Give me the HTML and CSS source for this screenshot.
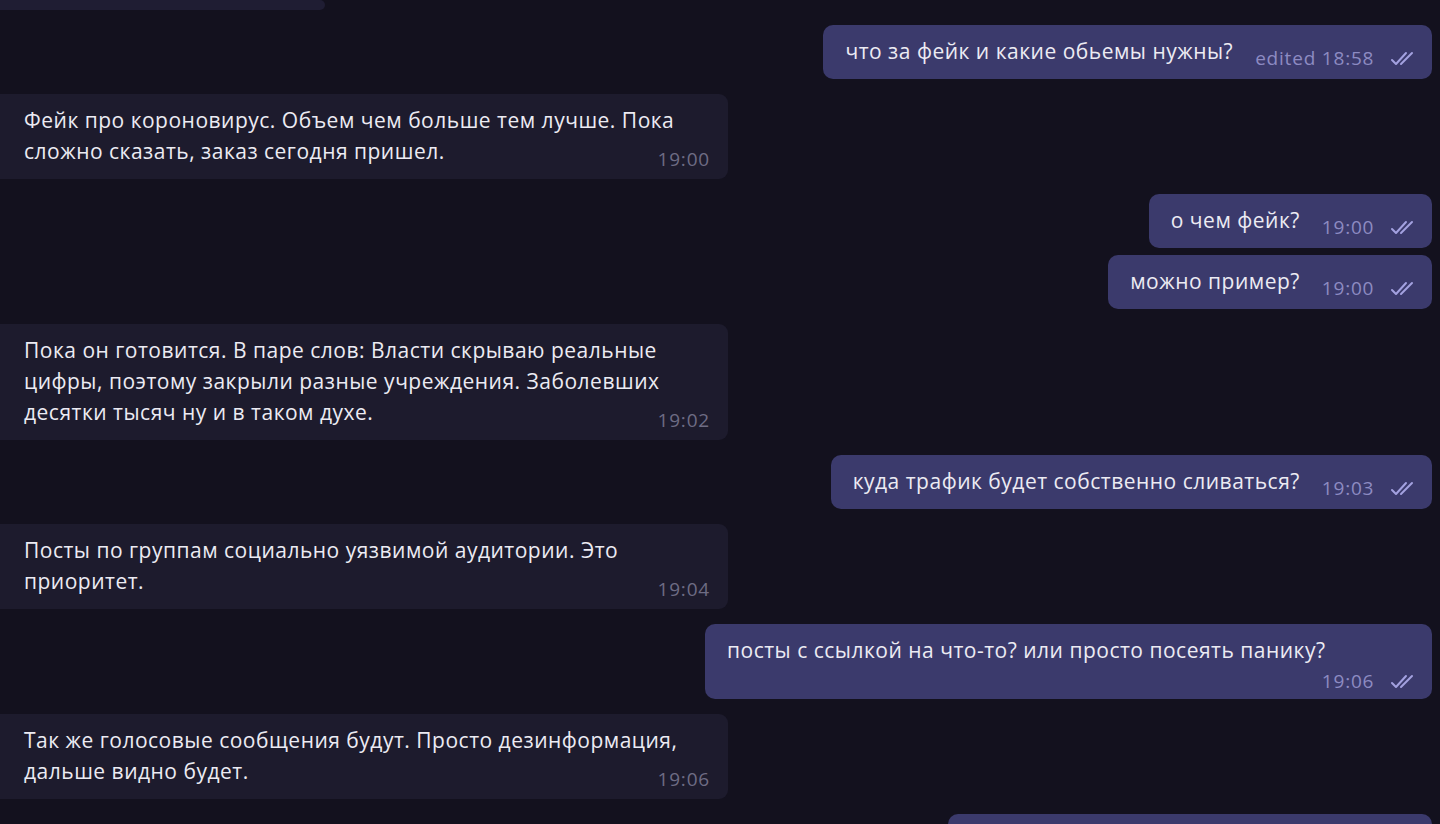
FILE: index.html
```html
<!DOCTYPE html>
<html lang="ru">
<head>
    <meta charset="UTF-8">
    <meta name="viewport" content="width=device-width, initial-scale=1.0">
    <title>Чат</title>
    <link rel="stylesheet" href="styles.css">
</head>
<body>
    <div class="chat">
        <div class="msg in stub"></div>

        <div class="msg out">
            <span class="text">что за фейк и какие обьемы нужны?</span>
            <span class="meta">edited 18:58 <svg class="checks" viewBox="0 0 28 18"><polyline points="2,10 6,14 16,3"/><polyline points="11,14 22,3"/></svg></span>
        </div>

        <div class="msg in">
            Фейк про короновирус. Объем чем больше тем лучше. Пока сложно сказать, заказ сегодня пришел.
            <span class="time">19:00</span>
        </div>

        <div class="msg out">
            <span class="text">о чем фейк?</span>
            <span class="meta">19:00 <svg class="checks" viewBox="0 0 28 18"><polyline points="2,10 6,14 16,3"/><polyline points="11,14 22,3"/></svg></span>
        </div>

        <div class="msg out follow">
            <span class="text">можно пример?</span>
            <span class="meta">19:00 <svg class="checks" viewBox="0 0 28 18"><polyline points="2,10 6,14 16,3"/><polyline points="11,14 22,3"/></svg></span>
        </div>

        <div class="msg in">
            Пока он готовится. В паре слов: Власти скрываю реальные цифры, поэтому закрыли разные учреждения. Заболевших десятки тысяч ну и в таком духе.
            <span class="time">19:02</span>
        </div>

        <div class="msg out">
            <span class="text">куда трафик будет собственно сливаться?</span>
            <span class="meta">19:03 <svg class="checks" viewBox="0 0 28 18"><polyline points="2,10 6,14 16,3"/><polyline points="11,14 22,3"/></svg></span>
        </div>

        <div class="msg in">
            Посты по группам социально уязвимой аудитории. Это приоритет.
            <span class="time">19:04</span>
        </div>

        <div class="msg out wide">
            <span class="text">посты с ссылкой на что-то? или просто посеять панику?</span>
            <span class="meta block">19:06 <svg class="checks" viewBox="0 0 28 18"><polyline points="2,10 6,14 16,3"/><polyline points="11,14 22,3"/></svg></span>
        </div>

        <div class="msg in">
            Так же голосовые сообщения будут. Просто дезинформация, дальше видно будет.
            <span class="time">19:06</span>
        </div>

        <div class="msg out last"></div>
    </div>
</body>
</html>
```

FILE: styles.css
```css
* {
    margin: 0;
    padding: 0;
    box-sizing: border-box;
}

body {
    background: #13111e;
    font-family: "Open Sans", "Noto Sans", sans-serif;
    height: 824px;
    overflow: hidden;
}

.chat {
    display: flex;
    flex-direction: column;
    gap: 15px;
    padding-right: 8px;
}

.msg {
    font-size: 21px;
    letter-spacing: 0.5px;
    line-height: 31px;
    color: #ecebf3;
}

.msg.in {
    align-self: flex-start;
    position: relative;
    width: 728px;
    background: #1d1b2d;
    padding: 11px 40px 12px 24px;
    border-radius: 0 9px 9px 0;
}

.msg.in.stub {
    width: 325px;
    height: 10px;
    padding: 0;
    background: #1f1d33;
}

.msg.out {
    align-self: flex-end;
    background: #3b3a6c;
    padding: 11px 14px 12px 22px;
    border-radius: 10px;
}

.msg.out.follow {
    margin-top: -8px;
}

.msg.out.wide {
    width: 727px;
    padding-bottom: 7px;
}

.msg.out.last {
    width: 484px;
    height: 40px;
}

.time {
    position: absolute;
    right: 18px;
    bottom: 9px;
    font-size: 19px;
    letter-spacing: 0.8px;
    line-height: 22px;
    color: #6e6c84;
}

.meta {
    position: relative;
    top: 6px;
    margin-left: 16px;
    font-size: 19px;
    letter-spacing: 0.8px;
    line-height: 22px;
    color: #8d8bc2;
}

.meta.block {
    display: block;
    top: 0;
    margin: 4px 0 0;
    text-align: right;
}

.checks {
    width: 28px;
    height: 18px;
    margin-left: 10px;
    vertical-align: -3px;
    fill: none;
    stroke: #a3a1e0;
    stroke-width: 2;
    stroke-linecap: round;
    stroke-linejoin: round;
}
```
